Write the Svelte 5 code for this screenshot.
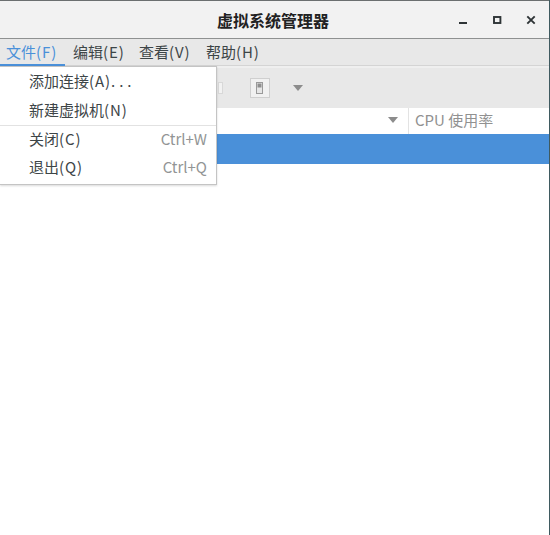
<script>
  const menus = [
    { label: '文件', key: '(F)', active: true },
    { label: '编辑', key: '(E)' },
    { label: '查看', key: '(V)' },
    { label: '帮助', key: '(H)' }
  ];
</script>

<div class="window">
  <header class="titlebar">
    <div class="title">虚拟系统管理器</div>
    <div class="controls">
      <svg width="14" height="14" viewBox="0 0 14 14"><rect x="3" y="10" width="8" height="2" fill="#2e3436"/></svg>
      <svg width="14" height="14" viewBox="0 0 14 14"><rect x="4" y="5" width="6.4" height="6" fill="none" stroke="#2e3436" stroke-width="1.9"/></svg>
      <svg width="14" height="14" viewBox="0 0 14 14"><path d="M3.3 4.3l7.4 7.4M10.7 4.3l-7.4 7.4" fill="none" stroke="#2e3436" stroke-width="1.9"/></svg>
    </div>
  </header>

  <nav class="menubar">
    {#each menus as m}
      <div class="menu-item" class:active={m.active}>{m.label}<span class="key">{m.key}</span></div>
    {/each}
  </nav>

  <div class="toolbar">
    <div class="sliver"></div>
    <div class="tool-btn">
      <svg width="8" height="12" viewBox="0 0 8 12"><rect x="0.5" y="0.5" width="6" height="11" fill="#e6e6e6" stroke="#9a9a9a"/><rect x="1.5" y="1.5" width="4" height="4" fill="#8f8f8f"/></svg>
    </div>
    <svg class="tool-arrow" width="12" height="8" viewBox="0 0 12 8"><path d="M1 1h10L6 7z" fill="#8c8c8c"/></svg>
  </div>

  <div class="list-head">
    <div class="col-name">
      <svg width="12" height="8" viewBox="0 0 12 8"><path d="M1 1h10L6 7z" fill="#8c8c8c"/></svg>
    </div>
    <div class="col-cpu">CPU 使用率</div>
  </div>
  <div class="selected-row"></div>
  <div class="list-body"></div>

  <div class="dropdown">
    <div class="group">
      <div class="entry"><span>添加连接<span class="key">(A)</span><span class="dots">...</span></span></div>
      <div class="entry"><span>新建虚拟机<span class="key">(N)</span></span></div>
    </div>
    <div class="group sep">
      <div class="entry"><span>关闭<span class="key">(C)</span></span><span class="accel">Ctrl+W</span></div>
      <div class="entry"><span>退出<span class="key">(Q)</span></span><span class="accel">Ctrl+Q</span></div>
    </div>
  </div>
</div>

<style>
  :global(body) {
    margin: 0;
    background: #fff;
  }
  .window {
    position: relative;
    width: 550px;
    height: 535px;
    overflow: hidden;
    display: flex;
    flex-direction: column;
    font-family: "Noto Sans CJK SC", "Noto Sans", sans-serif;
    font-size: 15px;
    color: #2e3436;
    background: #fff;
    border-right: 1px solid #3f5a60;
    box-sizing: border-box;
  }
  .titlebar {
    height: 39px;
    flex: none;
    box-sizing: border-box;
    border-top: 1px solid #6b6f70;
    border-bottom: 1px solid #8f9191;
    background: #f2f2f2;
    display: flex;
    align-items: center;
    justify-content: center;
    position: relative;
    padding-right: 3px;
  }
  .title {
    font-weight: 700;
    font-size: 16px;
    line-height: 20px;
    color: #222;
  }
  .controls {
    position: absolute;
    right: 11px;
    top: 11px;
    display: flex;
    gap: 20px;
  }
  .menubar {
    height: 27px;
    flex: none;
    box-sizing: border-box;
    display: flex;
    background: #e8e8e8;
    border-bottom: 1px solid #d4d4d4;
  }
  .menu-item {
    width: 67px;
    padding: 2px 0 0 6px;
    box-sizing: border-box;
    height: 27px;
    line-height: 22px;
    color: #3d4547;
    white-space: nowrap;
  }
  .menu-item:nth-child(2) {
    width: 66px;
  }
  .key {
    letter-spacing: 0.9px;
  }
  .active {
    color: #4a90d9;
    border-bottom: 2px solid #4a90d9;
    width: 65px;
    margin-right: 2px;
  }
  .toolbar {
    height: 42px;
    flex: none;
    box-sizing: border-box;
    background: #e8e8e8;
    border-top: 2px solid #efefef;
    display: flex;
    align-items: center;
    padding-left: 218px;
  }
  .sliver {
    width: 5px;
    height: 12px;
    background: #f2f2f2;
    border: 1px solid #d8d8d8;
    box-sizing: border-box;
  }
  .tool-btn {
    margin-left: 27px;
    width: 20px;
    height: 20px;
    box-sizing: border-box;
    border: 1px solid #cfcfcf;
    background: #f1f1f1;
    display: flex;
    align-items: center;
    justify-content: center;
  }
  .tool-arrow {
    margin-left: 22px;
  }
  .list-head {
    height: 26px;
    flex: none;
    display: flex;
    background: #fff;
    box-sizing: border-box;
  }
  .col-name {
    width: 409px;
    box-sizing: border-box;
    border-right: 1px solid #e3e3e3;
    display: flex;
    align-items: center;
    justify-content: flex-end;
    padding-right: 9px;
    padding-bottom: 2px;
  }
  .col-cpu {
    padding: 1px 0 0 6px;
    line-height: 21px;
    color: #919191;
  }
  .selected-row {
    height: 30px;
    flex: none;
    background: #4a90d9;
  }
  .list-body {
    flex: 1;
    background: #fff;
  }
  .dropdown {
    position: absolute;
    left: 0;
    top: 66px;
    width: 217px;
    height: 119px;
    box-sizing: border-box;
    background: #fff;
    border: 1px solid #c4c4c4;
    border-left: none;
    box-shadow: 0 1px 2px rgba(0, 0, 0, 0.15);
  }
  .group {
    padding: 0;
  }
  .sep {
    border-top: 1px solid #e2e2e2;
  }
  .entry {
    height: 29px;
    box-sizing: border-box;
    padding: 0 9px 2px 29px;
    display: flex;
    align-items: center;
    justify-content: space-between;
    color: #3d4547;
    white-space: nowrap;
  }
  .sep .entry {
    height: 28px;
    padding-bottom: 3px;
  }
  .dots {
    letter-spacing: 4px;
  }
  .accel {
    color: #929595;
  }
</style>
